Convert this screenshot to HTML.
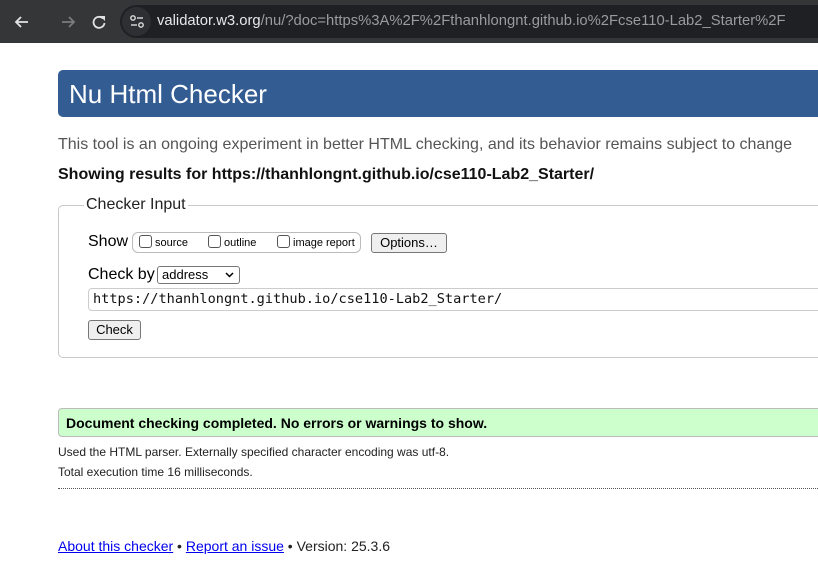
<!DOCTYPE html>
<html><head><meta charset="utf-8"><style>
*{box-sizing:border-box}
body{margin:0;width:818px;height:583px;background:#fff;font-family:"Liberation Sans",Arial,sans-serif;position:relative;overflow:hidden;color:#000}
.abs{position:absolute}
#bar{left:0;top:0;width:818px;height:43px;background:#353638}
#pill{left:120px;top:5px;width:720px;height:33px;border-radius:17px;background:#1f2023}
#tune{left:122px;top:7px;width:29px;height:29px;border-radius:50%;background:#2e2f32}
#url{left:157px;top:13px;font-size:14.8px;color:#9a9b9e;white-space:nowrap}
#url b{color:#e8e8ea;font-weight:normal}
#head{left:58px;top:70px;width:800px;height:47px;background:#335c93;border-radius:5px 0 0 5px}
#head span{position:absolute;left:11px;top:9px;color:#fff;font-size:26px}
.t{white-space:nowrap}
fieldset{position:absolute;left:58px;top:196px;width:800px;height:162px;border:1px solid #c8c8c8;border-radius:5px 0 0 5px;margin:0;padding:0}
legend{font-size:16px;padding:0 2px;margin-left:25px;color:#222}
.cb{display:inline-block;width:13px;height:13px;border:1px solid #555;border-radius:3px;vertical-align:-2px;margin-right:3px;background:#fff}
.btn{position:absolute;background:#efefef;border:1px solid #777;border-radius:3px;font-size:13px;padding:0;text-align:center;color:#000}
</style></head><body>
<div id="bar" class="abs"></div>
<svg class="abs" style="left:10px;top:11px" width="120" height="22" viewBox="0 0 120 22">
<path d="M18 11H6M11 6l-5 5 5 5" stroke="#e3e3e3" stroke-width="1.8" fill="none"/>
<path d="M52 11h12M59 6l5 5-5 5" stroke="#7b7c7e" stroke-width="1.8" fill="none"/>
<path d="M93 7.5A5.5 5.5 0 1 0 94.5 12" stroke="#e3e3e3" stroke-width="1.8" fill="none"/>
<path d="M90 5h5v5z" fill="#e3e3e3"/>
</svg>
<div id="pill" class="abs"></div>
<div id="tune" class="abs"></div>
<svg class="abs" style="left:128px;top:13px" width="18" height="18" viewBox="0 0 18 18">
<circle cx="5" cy="5" r="2.2" stroke="#ddd" stroke-width="1.4" fill="none"/><path d="M9 5h6" stroke="#ddd" stroke-width="1.4"/>
<circle cx="13" cy="12" r="2.2" stroke="#ddd" stroke-width="1.4" fill="none"/><path d="M3 12h6" stroke="#ddd" stroke-width="1.4"/>
</svg>
<div id="url" class="abs"><b>validator.w3.org</b>/nu/?doc=https%3A%2F%2Fthanhlongnt.github.io%2Fcse110-Lab2_Starter%2F</div>
<div id="head" class="abs"><span>Nu Html Checker</span></div>
<div class="abs t" style="left:58px;top:136px;font-size:16px;color:#555">This tool is an ongoing experiment in better HTML checking, and its behavior remains subject to change</div>
<div class="abs t" style="left:58px;top:166px;font-size:16px;font-weight:bold;color:#111">Showing results for https://thanhlongnt.github.io/cse110-Lab2_Starter/</div>
<fieldset><legend>Checker Input</legend></fieldset>
<div class="abs t" style="left:88px;top:233px;font-size:16px">Show</div>
<div class="abs" style="left:132px;top:232px;width:229px;height:21px;border:1px solid #bbb;border-radius:6px"></div>
<div class="abs t" style="left:139px;top:235px;font-size:11px"><span class="cb"></span>source</div>
<div class="abs t" style="left:208px;top:235px;font-size:11px"><span class="cb"></span>outline</div>
<div class="abs t" style="left:277px;top:235px;font-size:11px"><span class="cb"></span>image report</div>
<div class="btn" style="left:371px;top:233px;width:76px;height:20px;line-height:18px">Options…</div>
<div class="abs t" style="left:88px;top:266px;font-size:16px">Check by</div>
<div class="abs" style="left:157px;top:266px;width:83px;height:18px;border:1px solid #777;border-radius:3px;font-size:13px;padding-left:4px;line-height:16px">address
<svg style="position:absolute;right:5px;top:5px" width="9" height="6"><path d="M1 1l3.5 3.5L8 1" stroke="#000" stroke-width="1.5" fill="none"/></svg></div>
<div class="abs" style="left:88px;top:288px;width:760px;height:23px;border:1px solid #ccc;border-radius:4px 0 0 4px"></div>
<div class="abs t" style="left:93px;top:291px;font-size:13.6px;font-family:'DejaVu Sans Mono','Liberation Mono',monospace;color:#111">https://thanhlongnt.github.io/cse110-Lab2_Starter/</div>
<div class="btn" style="left:88px;top:320px;width:53px;height:20px;line-height:18px">Check</div>
<div class="abs" style="left:58px;top:408px;width:800px;height:29px;background:#ccffcc;border:1px solid #bbb;border-radius:4px 0 0 4px"></div>
<div class="abs t" style="left:66px;top:415px;font-size:14px;font-weight:bold">Document checking completed. No errors or warnings to show.</div>
<div class="abs t" style="left:58px;top:445px;font-size:12px;color:#222">Used the HTML parser. Externally specified character encoding was utf-8.</div>
<div class="abs t" style="left:58px;top:465px;font-size:12px;color:#222">Total execution time 16 milliseconds.</div>
<div class="abs" style="left:58px;top:488px;width:760px;border-top:1px dotted #555"></div>
<div class="abs t" style="left:58px;top:538px;font-size:14px;color:#222"><u style="color:#0000ee">About this checker</u> • <u style="color:#0000ee">Report an issue</u> • Version: 25.3.6</div>
</body></html>
